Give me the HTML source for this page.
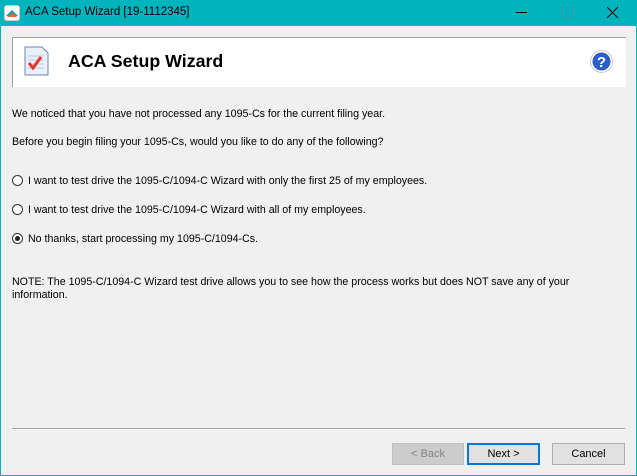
<!DOCTYPE html>
<html><head><style>
body{margin:0;width:637px;height:476px;overflow:hidden;font-family:"Liberation Sans",sans-serif;font-size:10.65px;color:#000}
.win{position:absolute;left:0;top:0;width:635px;height:475px;border:1px solid #00b4be;border-top:none;background:#f0f0f0}
.tb{position:absolute;left:0;top:0;width:637px;height:26px;background:#00b4be}
.t{position:absolute;white-space:nowrap}
.hdr{position:absolute;left:12px;top:37px;width:613px;height:49px;background:#fff;border-top:1px solid #a0a0a0;border-left:1px solid #a0a0a0}
.r{position:absolute;left:12px;width:11px;height:11px;border:1px solid #333;border-radius:50%;background:#fff;box-sizing:border-box}
.btn{position:absolute;top:443px;height:22px;box-sizing:border-box;border:1px solid #adadad;background:#e1e1e1;text-align:center;line-height:20px;font-size:11px}
</style></head><body>
<div class="win"></div>
<div class="tb">
<svg style="position:absolute;left:4px;top:5px" width="16" height="16"><rect width="16" height="16" rx="3" fill="#fff" stroke="#999"/><path d="M2 11 L8 5 L14 11 Z" fill="#1a9aa5"/><path d="M3 12 L9 8 L13 12Z" fill="#e8682a"/></svg>
<div class="t" style="left:25px;top:6px;font-size:11.5px">ACA Setup Wizard [19-1112345]</div>
<div style="position:absolute;left:516px;top:12px;width:11px;height:1px;background:#000"></div>
<div style="position:absolute;left:562px;top:7px;width:9px;height:9px;border:1px solid #3c9aa0"></div>
<svg style="position:absolute;left:607px;top:7px" width="11" height="11"><path d="M0 0L11 11M11 0L0 11" stroke="#000" stroke-width="1"/></svg>
</div>
<div class="hdr">
<svg style="position:absolute;left:11px;top:8px" width="26" height="30"><path d="M1 1H18L24 7V29H1Z" fill="#eaf0fa" stroke="#6d86b5"/><path d="M4 10H20M4 14H20M4 18H20M4 22H20" stroke="#b8c8e6"/><path d="M5 17L9 22L17 11" stroke="#e8322a" stroke-width="3" fill="none"/></svg>
<div class="t" style="left:55px;top:13px;font-size:17.8px;font-weight:bold">ACA Setup Wizard</div>
<svg style="position:absolute;left:577px;top:12px" width="23" height="23"><circle cx="11.5" cy="11.5" r="11" fill="#fff" stroke="#ccc"/><circle cx="11.5" cy="11.5" r="9" fill="#2a5fc9"/><text x="11.5" y="17" text-anchor="middle" font-size="15" font-weight="bold" fill="#fff" font-family="Liberation Sans">?</text></svg>
</div>
<div class="t" style="left:12px;top:108px">We noticed that you have not processed any 1095-Cs for the current filing year.</div>
<div class="t" style="left:12px;top:136px">Before you begin filing your 1095-Cs, would you like to do any of the following?</div>
<div class="r" style="top:175px"></div><div class="t" style="left:28px;top:175px">I want to test drive the 1095-C/1094-C Wizard with only the first 25 of my employees.</div>
<div class="r" style="top:204px"></div><div class="t" style="left:28px;top:204px">I want to test drive the 1095-C/1094-C Wizard with all of my employees.</div>
<div class="r" style="top:233px"><div style="position:absolute;left:2px;top:2px;width:5px;height:5px;border-radius:50%;background:#222"></div></div><div class="t" style="left:28px;top:233px">No thanks, start processing my 1095-C/1094-Cs.</div>
<div class="t" style="left:12px;top:276px">NOTE: The 1095-C/1094-C Wizard test drive allows you to see how the process works but does NOT save any of your</div>
<div class="t" style="left:12px;top:289px">information.</div>
<div style="position:absolute;left:12px;top:428px;width:613px;height:1px;background:#a0a0a0;border-bottom:1px solid #fff"></div>
<div class="btn" style="left:392px;width:72px;background:#cccccc;border-color:#bfbfbf;color:#838383">&lt; Back</div>
<div class="btn" style="left:467px;width:73px;border:2px solid #0078d7;line-height:18px">Next &gt;</div>
<div class="btn" style="left:552px;width:73px">Cancel</div>
</body></html>
